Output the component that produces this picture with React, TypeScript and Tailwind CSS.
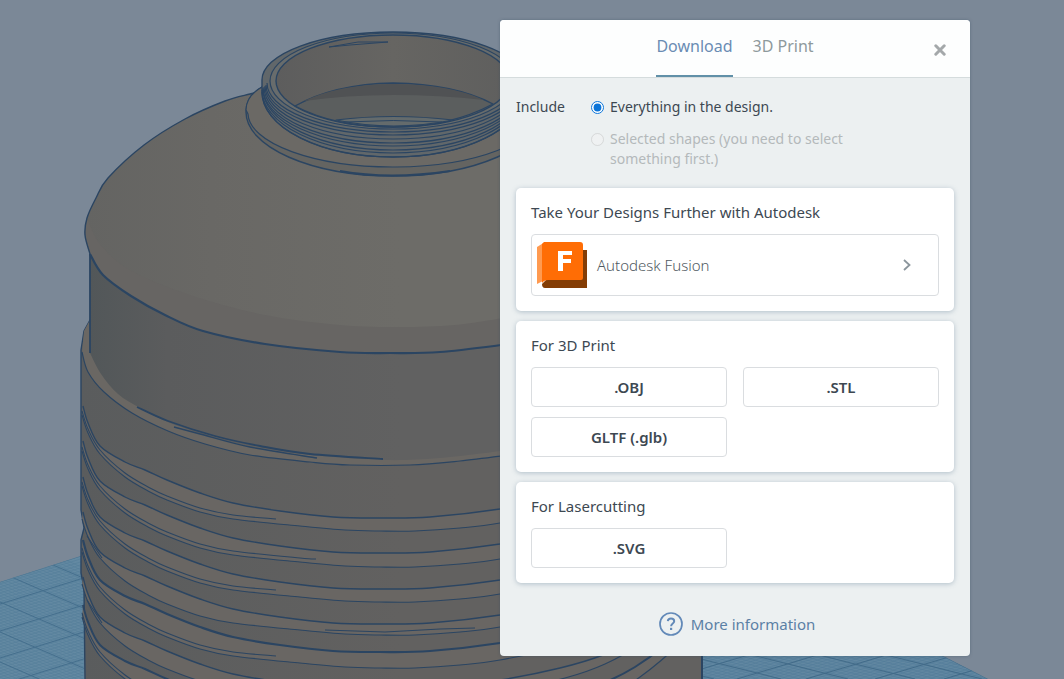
import { useState } from "react";
import type { ReactNode } from "react";

type Point = [number, number];

const INK = "#2b4562";

const GROOVE_TOP: Point[] = [
  [83, -112], [88, -95], [100, -72], [125, -56], [145, -48], [167, -38], [200, -25], [233, -15],
  [280, -7], [333, -1], [380, 0], [430, -1], [500, -9], [560, -21], [603, -34], [635, -50], [665, -72], [690, -97], [702, -120],
];

const GROOVE_BOTTOM: Point[] = [
  [82, -116], [88, -98], [100, -77], [125, -54], [150, -39], [167, -31], [200, -19], [233, -12],
  [300, -5], [345, -1], [380, 0], [415, 0], [460, -3], [500, -8], [565, -22], [605, -36], [640, -56], [680, -90], [702, -118],
];

const GROOVES = [
  { top: 518, bottom: 531, end: 280, weight: 1.4 },
  { top: 553, bottom: 567, end: 320, weight: 1.4 },
  { top: 589, bottom: 602, end: 280, weight: 1.4 },
  { top: 624, bottom: 635, end: 0, weight: 1.4 },
  { top: 652, bottom: 668, end: 280, weight: 2.2 },
  { top: 689, bottom: 700, end: 0, weight: 1.4 },
  { top: 717, bottom: 733, end: 280, weight: 2 },
];

const DOME_SIDE: Point[] = [
  [262, 91], [250, 94], [225, 101], [185, 119], [144, 145], [108, 178], [96, 198], [87, 218], [85, 235], [90, 254],
];

const DOME_RIM: Point[] = [
  [90, 254], [103, 275], [131, 296], [165, 315], [203, 331], [265, 344], [340, 352], [390, 353], [440, 352], [510, 344],
];

const DOME_FOLD: Point[] = [
  [510, 317], [455, 325], [400, 327], [340, 325], [265, 315], [190, 295], [130, 270], [100, 244], [87, 218],
];

const LEDGE: Point[] = [
  [82, 352], [88, 372], [104, 392], [132, 413], [168, 431], [205, 444], [250, 455], [310, 462], [350, 465], [410, 465],
  [460, 461], [510, 455],
];

const BAND_FOOT: Point[] = [
  [90, 353], [101, 374], [118, 394], [140, 408], [170, 423], [215, 438], [260, 448], [310, 455], [383, 460], [440, 458],
  [510, 450],
];

const shift = (points: Point[], dy: number): Point[] => points.map(([x, y]) => [x, y + dy]);

/** Segments of a smooth curve that passes through every point. */
function segments(points: Point[]) {
  return points
    .slice(0, -1)
    .map((p1, i) => {
      const p0 = points[i - 1] ?? p1;
      const p2 = points[i + 1];
      const p3 = points[i + 2] ?? p2;
      const a = [p1[0] + (p2[0] - p0[0]) / 6, p1[1] + (p2[1] - p0[1]) / 6];
      const b = [p2[0] - (p3[0] - p1[0]) / 6, p2[1] - (p3[1] - p1[1]) / 6];
      return `C${a[0]} ${a[1]} ${b[0]} ${b[1]} ${p2[0]} ${p2[1]}`;
    })
    .join(" ");
}

const curve = (points: Point[]) => `M${points[0][0]} ${points[0][1]} ${segments(points)}`;
const join = (points: Point[]) => `L${points[0][0]} ${points[0][1]} ${segments(points)}`;

/** Front half of a horizontal ring around the jar's axis. */
const ring = (rx: number, cy: number, ry: number) => `M${393 - rx} ${cy} A${rx} ${ry} 0 0 0 ${393 + rx} ${cy}`;

function Workplane() {
  const minor = Array.from({ length: 90 }, (_, i) => i);
  const major = Array.from({ length: 9 }, (_, i) => i);
  return (
    <g>
      <clipPath id="plane-left">
        <path d="M0 582 L84 555 V679 H0Z" />
      </clipPath>
      <clipPath id="plane-right">
        <path d="M700 630 H880 L945 657 L988 679 H700Z" />
      </clipPath>
      <g clipPath="url(#plane-left)">
        <rect y="550" width="90" height="130" fill="#6389a2" />
        {minor.map((i) => (
          <path key={i} d={`M0 ${530 + i * 3} L90 ${571 + i * 3} M0 ${560 + i * 3} L90 ${532 + i * 3}`} stroke="#527d99" strokeWidth=".5" />
        ))}
        {major.map((i) => (
          <path key={i} d={`M0 ${542 + i * 30} L90 ${581 + i * 30} M0 ${577 + i * 27} L90 ${549 + i * 27}`} stroke="#456f8d" strokeWidth="1" />
        ))}
        <path d="M0 582 L84 555" stroke="#4c7590" />
      </g>
      <g clipPath="url(#plane-right)">
        <rect x="700" y="630" width="300" height="50" fill="#6187a1" />
        {minor.map((i) => (
          <path key={i} d={`M700 ${560 + i * 3} L1000 ${647 + i * 3} M700 ${610 + i * 3} L1000 ${508 + i * 3}`} stroke="#507b98" strokeWidth=".5" />
        ))}
        {major.map((i) => (
          <path key={i} d={`M${578 + i * 67} 645 L${714 + i * 67} 679 M${668 + i * 69} 679 L${782 + i * 69} 645`} stroke="#426b89" strokeWidth="1" />
        ))}
        <path d="M880 630 L945 657 L988 679" fill="none" stroke="#456d8a" />
      </g>
    </g>
  );
}

function Neck() {
  const threads: [number, number, number][] = [
    [131, 92, 65],
    [131, 90, 63],
    [130, 89, 61],
    [130, 88, 58],
    [129, 87, 56],
    [128, 86, 53],
    [127, 85, 50],
    [126, 83, 49],
  ];
  return (
    <g>
      <path d="M262 87 Q246 96 246 112 A147 64 0 0 0 540 112 V80Z" fill="#646461" />
      <path d="M262 87 Q246 96 246 110 L248 114 A145 54 0 0 0 538 112 V80Z" fill="#6b6965" strokeWidth="1.2" />
      <path d="M340 171 Q390 180 450 171" strokeWidth="2" />
      <path d="M262 92 V80 A131 48 0 0 1 524 80 V92 A131 65 0 0 1 262 92Z" fill="#61676a" />
      {threads.map(([rx, cy, ry]) => (
        <path key={ry} d={ring(rx, cy, ry)} strokeWidth="1.2" />
      ))}
      <ellipse cx="393" cy="81" rx="123" ry="48" strokeWidth="1.2" fill="#686c6c" />
      <ellipse cx="393" cy="81" rx="117" ry="46" fill="url(#mouth)" />
      <path d="M295 106 Q335 84 393 83 Q455 84 493 104 Q450 127 393 127 Q335 127 295 106Z" fill="#5b5e5e" />
      <path d="M304 101 Q340 84 393 84 Q450 84 484 100 Q440 95 393 95 Q345 95 304 101Z" fill="#505254" stroke="none" />
      <path d="M336 120 Q393 113 453 120 Q393 132 336 120Z" fill="#646b6c" strokeWidth="1.1" />
      <path d="M345 122 Q393 119 442 122" strokeWidth="1" />
      <path d="M329 47 L358 42 L388 42 L350 45Z" strokeWidth="1" />
    </g>
  );
}

function Jar() {
  return (
    <g fill="none" stroke={INK} strokeWidth="1.4" strokeLinejoin="round">
      <path
        d="M90 320 L84 331 L81 350 L81 510 L84 528 L81 540 L81 573 L84 588 L85 680 H702 V320Z"
        fill="url(#wall)"
      />
      <path d={`M90 320 L84 331 ${join(LEDGE)} V430 L200 420 L100 352Z`} fill="#6a6763" stroke="none" />
      <path d={curve(LEDGE)} strokeWidth="1.2" />
      <path d={`M90 254 ${join(BAND_FOOT)} V340Z`} fill="url(#band)" stroke="none" />
      <path d="M90 254 V353" strokeWidth="1.8" />
      <path d={curve([[137, 407], [168, 421], [215, 436], [260, 446], [310, 454], [383, 459]])} strokeWidth="1.8" />
      <path d={curve([[174, 427], [200, 434], [250, 447], [317, 458]])} />
      {GROOVES.map((g) => (
        <g key={g.top}>
          <path
            d={`${curve(shift(GROOVE_TOP, g.top))} ${join(shift(GROOVE_BOTTOM, g.bottom).reverse())}Z`}
            fill="#696663"
            stroke="none"
          />
          <path d={curve(shift(GROOVE_TOP, g.top))} strokeWidth={g.weight} />
          <path d={curve(shift(GROOVE_BOTTOM, g.bottom))} strokeWidth="1.1" />
          {g.end > 0 && (
            <path
              d={curve([
                ...shift(GROOVE_BOTTOM, g.bottom - 4).filter(([x]) => x < g.end),
                [g.end - 4, g.bottom - (g.end > 300 ? 8 : 12)],
              ])}
              strokeWidth="1.1"
            />
          )}
        </g>
      ))}
      <path d="M325 630 L385 632 L440 629 L475 628 M87 536 L102 558 M87 600 L102 623" strokeWidth="1.1" />
      <path d="M702 640 V680" strokeWidth="2" />

      <path d={`${curve(DOME_SIDE)} ${join(DOME_RIM)} V94Z`} fill="url(#dome)" stroke="none" />
      <path d={`${curve(DOME_FOLD)} L85 235 ${join(DOME_RIM)}Z`} fill="#676563" stroke="none" />
      <path d={curve(DOME_SIDE)} />
      <path d={curve(DOME_RIM)} strokeWidth="2.2" />
      <Neck />
    </g>
  );
}

function Scene() {
  return (
    <svg
      aria-hidden="true"
      className="absolute inset-0 h-full w-full"
      viewBox="0 0 1064 679"
      preserveAspectRatio="xMinYMin slice"
    >
      <defs>
        <linearGradient id="wall" gradientUnits="userSpaceOnUse" x1="81" y1="0" x2="400" y2="0">
          <stop offset="0" stopColor="#5a5c5d" />
          <stop offset="1" stopColor="#626160" />
        </linearGradient>
        <linearGradient id="band" gradientUnits="userSpaceOnUse" x1="90" y1="0" x2="400" y2="0">
          <stop offset="0" stopColor="#525759" />
          <stop offset=".25" stopColor="#5b5c5d" />
          <stop offset="1" stopColor="#616161" />
        </linearGradient>
        <linearGradient id="dome" gradientUnits="userSpaceOnUse" x1="85" y1="0" x2="400" y2="0">
          <stop offset="0" stopColor="#646462" />
          <stop offset=".4" stopColor="#696865" />
          <stop offset="1" stopColor="#6d6c68" />
        </linearGradient>
        <linearGradient id="mouth" gradientUnits="userSpaceOnUse" x1="276" y1="0" x2="510" y2="0">
          <stop offset="0" stopColor="#5d5d5d" />
          <stop offset=".5" stopColor="#666562" />
          <stop offset="1" stopColor="#5f5f5e" />
        </linearGradient>
      </defs>
      <rect width="1064" height="679" fill="#7b8897" />
      <Workplane />
      <Jar />
    </svg>
  );
}

function FusionLogo() {
  return (
    <svg aria-hidden="true" className="h-12 w-[52px] shrink-0" viewBox="0 0 52 48">
      <path d="M44 9 H51 V47 H44Z" fill="#843d05" />
      <path d="M10 39 H46 L51 43 V47 H9 Q6 47 6 43Z" fill="#843d05" />
      <path d="M1 6 L9 1 V39 L1 43Z" fill="#ff9a50" />
      <path d="M8 1 H44 Q47 1 47 4 V37 Q47 39 45 39 H12 Q8 39 6 42 V3Z" fill="#ff6d05" />
      <path d="M22 10 H36 V14 H27 V18 H35 V22 H27 V30 H22Z" fill="#fff" />
    </svg>
  );
}

function Card({ title, children }: { title: string; children: ReactNode }) {
  return (
    <section className="rounded-[5px] bg-white px-[15px] pt-[14px] pb-[15px] shadow-[0_1px_5px_rgba(70,100,130,0.35)]">
      <h2 className="mb-3 text-[15px] leading-5">{title}</h2>
      {children}
    </section>
  );
}

function FormatButton({ label }: { label: string }) {
  return (
    <button type="button" className="h-10 rounded border border-[#dadde0] bg-white text-[15px] font-semibold hover:bg-slate-50">
      {label}
    </button>
  );
}

export default function App() {
  const [tab, setTab] = useState("Download");

  return (
    <main className="relative flex min-h-screen items-start justify-end overflow-hidden bg-[#7b8897] pt-5 pr-[94px] font-['Noto_Sans',sans-serif] text-[#3d4852]">
      <Scene />
      <div
        role="dialog"
        aria-label="Download"
        className="relative w-[470px] max-w-full overflow-hidden rounded bg-[#ecf0f1] shadow-[0_0_3px_rgba(60,80,100,0.5)]"
      >
        <header className="relative flex justify-center border-b border-[#d5dcdd] bg-[#fdfefe]">
          <div role="tablist" className="flex gap-5">
            {["Download", "3D Print"].map((name) => (
              <button
                key={name}
                type="button"
                role="tab"
                aria-selected={tab === name}
                onClick={() => setTab(name)}
                className={
                  tab === name
                    ? "h-[57px] border-b-2 border-[#6190a8] pb-1 text-base text-[#6a8cb3]"
                    : "h-[57px] border-b-2 border-transparent pb-1 text-base text-[#8e999c]"
                }
              >
                {name}
              </button>
            ))}
          </div>
          <button type="button" aria-label="Close" className="absolute top-5 right-5 flex size-5 items-center justify-center">
            <svg aria-hidden="true" className="size-3" viewBox="0 0 12 12" stroke="#a4a8aa" strokeWidth="3" strokeLinecap="round">
              <path d="M1.8 1.8 L10.2 10.2 M10.2 1.8 L1.8 10.2" />
            </svg>
          </button>
        </header>

        <div className="px-4 pt-[19px] pb-5">
          <fieldset className="grid grid-cols-[75px_1fr] text-sm leading-5">
            <legend className="float-left w-[75px]">Include</legend>
            <div className="flex flex-col gap-3 pr-20">
              <label className="flex gap-[6px]">
                <input type="radio" name="include" defaultChecked className="mt-[4px] size-[13px] shrink-0 accent-[#0b74d8]" />
                Everything in the design.
              </label>
              <label className="flex gap-[6px] text-[#b4b9bb]">
                <input type="radio" name="include" disabled className="mt-[4px] size-[13px] shrink-0 opacity-60" />
                Selected shapes (you need to select something first.)
              </label>
            </div>
          </fieldset>

          <div className="mt-[19px] flex flex-col gap-[10px]">
            <Card title="Take Your Designs Further with Autodesk">
              <button
                type="button"
                className="flex h-[62px] w-full items-center rounded border border-[#dadde0] pr-[27px] pl-1 text-left text-[15px] font-light text-[#4f5961]"
              >
                <FusionLogo />
                <span className="ml-[9px] flex-1">Autodesk Fusion</span>
                <svg aria-hidden="true" className="h-3 w-2" viewBox="0 0 8 12" fill="none" stroke="#8b959c" strokeWidth="1.8">
                  <path d="M1 1 L6.5 6 L1 11" />
                </svg>
              </button>
            </Card>
            <Card title="For 3D Print">
              <div className="grid grid-cols-2 gap-x-4 gap-y-[10px]">
                <FormatButton label=".OBJ" />
                <FormatButton label=".STL" />
                <FormatButton label="GLTF (.glb)" />
              </div>
            </Card>
            <Card title="For Lasercutting">
              <div className="grid grid-cols-2 gap-x-4">
                <FormatButton label=".SVG" />
              </div>
            </Card>
          </div>

          <div className="mt-7 flex justify-center pt-px pl-1">
            <a href="#more-information" className="flex items-center gap-2 text-[15px] leading-6 text-[#5b80a5]">
              <svg aria-hidden="true" className="size-6" viewBox="0 0 24 24" fill="none" stroke="#6289b8" strokeWidth="1.7">
                <circle cx="12" cy="12" r="11" />
                <path d="M8.8 9.2 C9 7.2 10.2 6.6 12 6.6 C14 6.6 15.2 7.8 15.2 9.3 C15.2 11.6 12.1 11.5 12.1 14.2" strokeWidth="2" />
                <path d="M12.1 15.8 V18" strokeWidth="2.2" />
              </svg>
              More information
            </a>
          </div>
        </div>
      </div>
    </main>
  );
}
